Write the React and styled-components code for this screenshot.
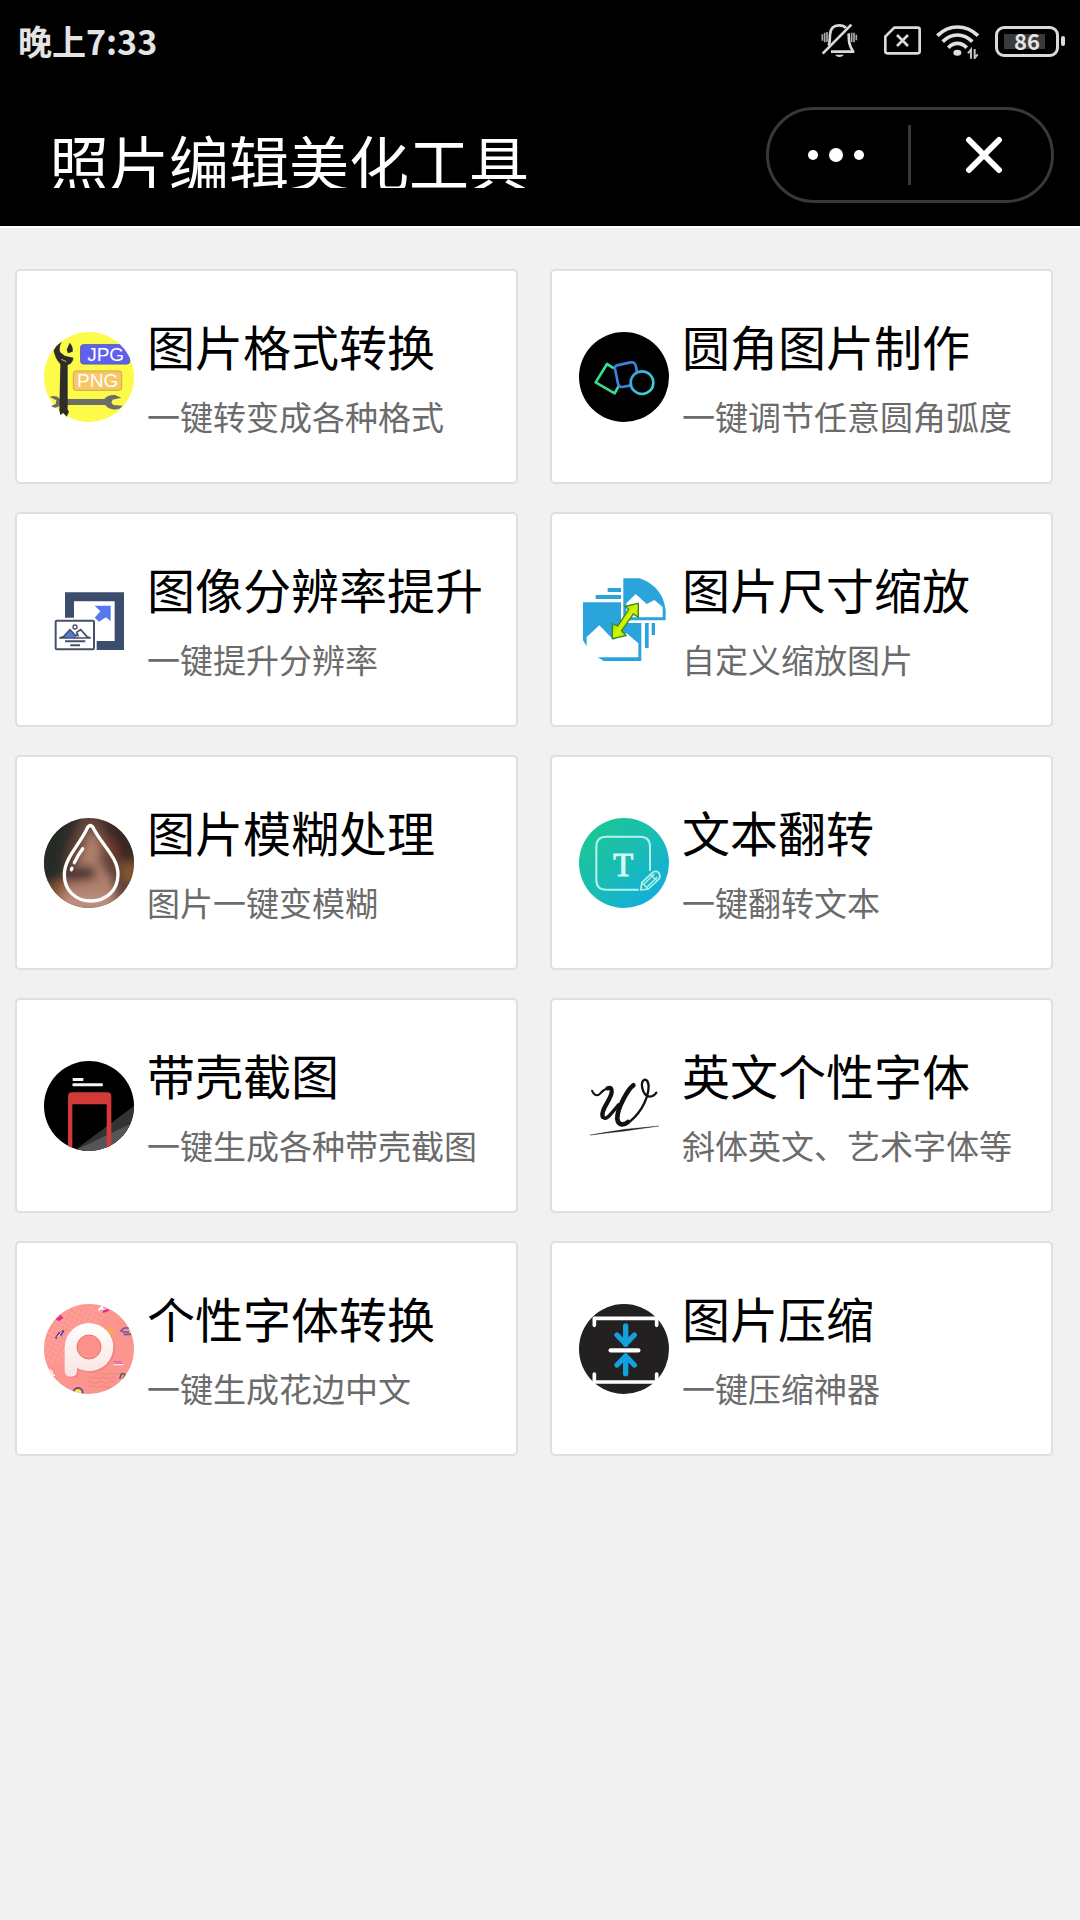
import React from 'react';
import styled, { createGlobalStyle } from 'styled-components';

const GlobalStyle = createGlobalStyle`
  * {
    box-sizing: border-box;
  }
  body {
    margin: 0;
    background-color: #f1f1f1;
    font-family: 'Noto Sans CJK SC', 'Noto Sans', sans-serif;
  }
`

const TopArea = styled.header`
  background-color: #000;
  border-bottom: 2px solid #fff;
`

const StatusBar = styled.div`
  display: flex;
  align-items: center;
  height: 82px;
  padding: 0 15px 0 18px;
  color: #e4e4e4;
`

const Time = styled.div`
  margin-right: auto;
  font-size: 34px;
  font-weight: 700;
  line-height: 80px;
`

const StatusIcon = styled.svg`
  display: block;
  height: 36px;
  width: ${({ $width }) => $width}px;
  margin-right: ${({ $gap }) => $gap}px;
`

const Battery = styled.div`
  display: flex;
  align-items: center;
  gap: 2px;
`

const BatteryBody = styled.div`
  width: 64px;
  height: 31px;
  border: 3px solid #dadada;
  border-radius: 9px;
  background: linear-gradient(#3a3a3a, #3a3a3a) 6px center / 41px 15px no-repeat;
  font-size: 22px;
  font-weight: 700;
  line-height: 23px;
  text-align: center;
`

const BatteryCap = styled.div`
  width: 4px;
  height: 10px;
  border-radius: 2px;
  background-color: #dadada;
`

const TitleBar = styled.div`
  display: flex;
  align-items: center;
  justify-content: space-between;
  height: 144px;
  padding: 2px 26px 0 49px;
`

const PageTitle = styled.h1`
  margin: 12px 0 0;
  font-size: 60px;
  font-weight: 400;
  line-height: 54px;
  color: #fff;
  white-space: nowrap;
  overflow: hidden;
`

const Capsule = styled.div`
  display: flex;
  align-items: center;
  width: 288px;
  height: 96px;
  border: 3px solid #383838;
  border-radius: 48px;
`

const CapsuleButton = styled.button`
  display: flex;
  flex: 1;
  align-items: center;
  justify-content: center;
  height: 100%;
  padding: ${({ $padding }) => $padding};
  border: 0;
  background: none;
  cursor: pointer;
`

const CapsuleDivider = styled.span`
  width: 3px;
  height: 60px;
  background-color: #383838;
`

const ToolGrid = styled.main`
  display: grid;
  grid-template-columns: 1fr 1fr;
  gap: 28px 32px;
  padding: 41px 27px 41px 15px;
`

const ToolCard = styled.a`
  display: flex;
  align-items: center;
  gap: 13px;
  height: 215px;
  padding: 0 27px;
  border: 2px solid #dfdfdf;
  border-radius: 5px;
  background-color: #fff;
  color: #000;
  text-decoration: none;
`

const ToolIcon = styled.svg`
  display: block;
  flex: none;
  width: 90px;
  height: 90px;
`

const ToolText = styled.div`
  padding-top: 10px;
  white-space: nowrap;
`

const ToolName = styled.div`
  font-size: 48px;
  line-height: 70px;
`

const ToolNote = styled.div`
  font-size: 33px;
  line-height: 73px;
  color: #6b6b6b;
`

const MuteIcon = () => (
    <StatusIcon $width={37} $gap={25} viewBox="243 69 111 108" fill="none" stroke="#dadada" strokeWidth="8">
        <path d="M266 137C270 128 269 116 270 104C271 84 283 76 297 76C307 76 313 78 318 84" />
        <path d="M326 100C327 122 325 132 339 154V155H273" />
        <path d="M248 161L334 74" />
        <path d="M285 164H312Q307 171 298 171Q290 171 285 164Z" fill="#d6d6d6" stroke="none" />
        <path d="M247 103V122M254 98V127M261 96V126M335 98V126M342 98V127M349 104V121" strokeWidth="5" stroke="#a9a9a9" />
    </StatusIcon>
)

const NoSimIcon = () => (
    <StatusIcon $width={39} $gap={13} viewBox="429 69 117 108" fill="none" stroke="#dadada" strokeWidth="8">
        <path d="M463 83H533Q539 83 539 89V154Q539 160 533 160H442Q436 160 436 154V110Z" />
        <path d="M471 105L504 138M504 105L471 138" />
    </StatusIcon>
)

const WifiIcon = () => (
    <StatusIcon $width={45} $gap={15} viewBox="585 69 135 108" fill="none" stroke="#e0e0e0" strokeWidth="11">
        <path d="M592 107Q619 81 652 81Q687 81 714 107" />
        <path d="M608 125Q628 105 652 105Q677 105 697 125" />
        <path d="M625 143Q637 130 652 130Q668 130 680 143" />
        <ellipse cx="652" cy="158" rx="12" ry="9" fill="#e0e0e0" stroke="none" />
        <path d="M693 176V149L684 160M704 147V174L713 163" strokeWidth="6" stroke="#c4c4c4" />
    </StatusIcon>
)

const MoreIcon = () => (
    <svg width="60" height="16" viewBox="0 0 60 16" fill="#fff" aria-hidden="true">
        <circle cx="7" cy="8" r="5" />
        <circle cx="30" cy="8" r="7" />
        <circle cx="53" cy="8" r="5" />
    </svg>
)

const CloseIcon = () => (
    <svg width="38" height="38" viewBox="0 0 38 38" stroke="#fff" strokeWidth="6" strokeLinecap="round" aria-hidden="true">
        <path d="M4 4L34 34M34 4L4 34" />
    </svg>
)

const FormatIcon = () => (
    <ToolIcon viewBox="45 63 270 270">
        <clipPath id="formatClip">
            <circle cx="180" cy="198" r="135" />
        </clipPath>
        <circle cx="180" cy="198" r="135" fill="#fdfb4a" />
        <g clipPath="url(#formatClip)">
            <rect x="155" y="101" width="147" height="58" rx="8" fill="#6060ee" stroke="#5559b8" strokeWidth="3" />
            <rect x="133" y="180" width="145" height="58" rx="8" fill="#f7c766" stroke="#d9a24e" strokeWidth="3" />
        </g>
        <text x="230" y="150" fontFamily="Liberation Sans" fontSize="57" textAnchor="middle" fill="#fff">JPG</text>
        <text x="206" y="229" fontFamily="Liberation Sans" fontSize="57" textAnchor="middle" fill="#fff">PNG</text>
        <path d="M112 264H226Q236 251 258 252L277 260L251 266L247 275L253 282L281 284Q270 298 250 295Q236 292 228 282H112Z" fill="#6c6c68" />
        <path d="M62 258Q82 249 93 264V283Q80 296 66 285L80 279L82 268Z" fill="#6c6c68" />
        <path d="M99 92Q88 108 94 124L107 134L133 140Q133 156 116 162V296L120 302L113 317L103 306L94 312L91 298L94 160Q78 142 74 119Q80 103 99 92Z" fill="#2e2d2a" />
        <path d="M122 95L113 116L117 127L131 122Q134 108 122 95Z" fill="#2e2d2a" />
        <path d="M97 145L112 152" stroke="#c9c650" strokeWidth="3" />
    </ToolIcon>
)

const RoundCornerIcon = () => (
    <ToolIcon viewBox="58 64 270 270" fill="none" strokeWidth="8" strokeLinejoin="round">
        <defs>
            <linearGradient id="shapeGreen" x1="0" y1="1" x2="1" y2="0">
                <stop offset="0" stopColor="#38d77a" />
                <stop offset="1" stopColor="#38e0b4" />
            </linearGradient>
            <linearGradient id="shapeCyan" x1="0" y1="0" x2="1" y2="1">
                <stop offset="0" stopColor="#3a9fe0" />
                <stop offset="1" stopColor="#3ddbd8" />
            </linearGradient>
        </defs>
        <circle cx="193" cy="199" r="135" fill="#000" />
        <path d="M163 173L142 160L108 215L165 248L178 224" stroke="url(#shapeGreen)" />
        <path d="M232 184L228 164Q224 153 213 155L172 164Q165 166 166 174L175 219Q178 230 188 229L213 224" stroke="#3d82dc" />
        <circle cx="247" cy="216" r="34" stroke="url(#shapeCyan)" />
    </ToolIcon>
)

const ResolutionIcon = () => (
    <ToolIcon viewBox="45 42 270 270">
        <path d="M108 94H285V267H203V240H257V121H135V170H108Z" fill="#3d4d6e" />
        <path d="M197 134H245V181L231 169L210 182L197 170L214 151Z" fill="#5578ee" />
        <rect x="80" y="179" width="115" height="86" rx="3" fill="#fff" stroke="#46506b" strokeWidth="6" />
        <path d="M91 231L104 227L123 206L146 230Z" fill="#5578ee" />
        <path d="M91 231H185L174 227L155 206L143 214L147 224L138 222L123 206L104 227Z" fill="none" stroke="#46506b" strokeWidth="5" />
        <circle cx="138" cy="198" r="6" fill="none" stroke="#46506b" strokeWidth="4" />
        <path d="M108 241H169M124 253H153" stroke="#46506b" strokeWidth="6" />
    </ToolIcon>
)

const ResizeIcon = () => (
    <ToolIcon viewBox="60 44 270 270">
        <defs>
            <linearGradient id="resizeArrow" x1="0" y1="0" x2="1" y2="1">
                <stop offset="0" stopColor="#35b51c" />
                <stop offset="0.5" stopColor="#d8f500" />
                <stop offset="1" stopColor="#5bce12" />
            </linearGradient>
        </defs>
        <path d="M193 54H242Q311 79 320 149V180H193Z" fill="#2ba4db" />
        <path d="M202 171V129L230 101L263 131L286 119L311 140V171Z" fill="#fff" />
        <path d="M72 126H186V188H247V302H134L116 291H238V249L203 219L163 238L121 195L83 230V258L72 240Z" fill="#2ba4db" />
        <path d="M146 83H186V95H146ZM110 104H186V116H110ZM258 188H269V263H258ZM278 188H288V224H278Z" fill="#2ba4db" />
        <path d="M238 129L198 138L209 147L176 197L160 190V235L201 226L188 211L223 161L238 171Z" fill="url(#resizeArrow)" stroke="#3b8427" strokeWidth="4" />
    </ToolIcon>
)

const BlurIcon = () => (
    <ToolIcon viewBox="45 54 270 270">
        <defs>
            <clipPath id="blurClip">
                <circle cx="180" cy="189" r="135" />
            </clipPath>
            <filter id="soften" x="-30%" y="-30%" width="160%" height="160%">
                <feGaussianBlur stdDeviation="14" />
            </filter>
        </defs>
        <g clipPath="url(#blurClip)">
            <rect x="45" y="54" width="270" height="270" fill="#5e4138" />
            <g filter="url(#soften)">
                <path d="M20 30H160L110 150L100 240L20 250Z" fill="#262b28" />
                <path d="M210 30H340V180H270Z" fill="#3a2823" />
                <path d="M200 110L262 130V200Z" fill="#7a3e31" />
                <path d="M182 80L215 130L215 190L250 240L270 300L90 330L110 250L150 180Z" fill="#b0806d" />
                <path d="M110 205L190 195L205 235L120 250Z" fill="#493530" />
                <path d="M80 250L110 240V300H70Z" fill="#97603a" />
                <path d="M275 195H320V245H285Z" fill="#8d5a28" />
                <path d="M90 290L250 280L260 340H90Z" fill="#bd8e80" />
            </g>
        </g>
        <path d="M184 76Q190 77 194 86C218 133 268 174 267 224C266 272 231 303 186 303C141 303 106 272 106 224C106 174 153 133 174 86Q178 77 184 76Z" fill="none" stroke="#fff" strokeWidth="10" />
        <path d="M161 146Q147 164 136 188M129 205L127 209" fill="none" stroke="#fff" strokeWidth="10" strokeLinecap="round" />
    </ToolIcon>
)

const TextFlipIcon = () => (
    <ToolIcon viewBox="58 54 270 270">
        <defs>
            <linearGradient id="flipFill" x1="0.15" y1="0.1" x2="0.85" y2="0.9">
                <stop offset="0" stopColor="#1bc695" />
                <stop offset="0.5" stopColor="#1abcb5" />
                <stop offset="1" stopColor="#12aedc" />
            </linearGradient>
        </defs>
        <circle cx="193" cy="189" r="135" fill="url(#flipFill)" />
        <path d="M237 269H140Q110 269 110 239V140Q110 110 140 110H241Q271 110 271 140V212" fill="none" stroke="#b5f3ea" strokeWidth="6" />
        <text x="191" y="228" fontFamily="Liberation Serif" fontSize="98" textAnchor="middle" fill="#d5faf5" stroke="#d5faf5" strokeWidth="3">T</text>
        <path d="M243 270L247 247L279 217Q288 211 297 218Q304 227 298 237L266 267Z" fill="#1ab5c8" stroke="#b5f3ea" strokeWidth="5" strokeLinejoin="round" />
        <path d="M247 248L266 267M254 251L284 222M263 260L293 231M272 223L292 242" stroke="#b5f3ea" strokeWidth="4" />
    </ToolIcon>
)

const ShellIcon = () => (
    <ToolIcon viewBox="45 63 270 270">
        <clipPath id="shellClip">
            <circle cx="180" cy="198" r="135" />
        </clipPath>
        <g clipPath="url(#shellClip)">
            <rect x="45" y="63" width="270" height="270" fill="#000" />
            <path d="M134 333L320 194V340Z" fill="#333" />
            <path d="M134 333L320 244V340Z" fill="#555" />
            <path d="M117 321V169Q117 157 129 157H235Q247 157 247 169V321H233V193H130V321Z" fill="#d13a38" />
            <path d="M131 114H163V123H131Z" fill="#f5f5f5" />
            <rect x="130" y="130" width="92" height="9" rx="4" fill="#f5f5f5" />
        </g>
    </ToolIcon>
)

const ScriptIcon = () => (
    <ToolIcon viewBox="58 64 270 270" fill="none" stroke="#111" strokeLinecap="round" strokeLinejoin="round">
        <path d="M97 153Q104 171 118 165Q131 150 144 145" strokeWidth="6" />
        <path d="M144 146Q158 141 156 158C153 182 122 210 129 231" strokeWidth="13" />
        <path d="M129 231C138 247 154 222 177 195" strokeWidth="10" />
        <path d="M221 137C205 148 172 206 173 237C175 256 190 259 205 247" strokeWidth="14" />
        <path d="M200 253C234 231 266 185 267 140Q265 118 254 120Q243 126 248 146Q253 169 270 171Q283 170 290 159" strokeWidth="7" />
        <path d="M92 286Q150 276 196 269L298 259L196 274Q140 280 92 286Z" fill="#222" strokeWidth="1" />
    </ToolIcon>
)

const FancyFontIcon = () => (
    <ToolIcon viewBox="45 57 270 270">
        <defs>
            <clipPath id="fancyClip">
                <circle cx="180" cy="192" r="135" />
            </clipPath>
            <pattern id="fancyMesh" width="14" height="14" patternUnits="userSpaceOnUse" patternTransform="rotate(28)">
                <path d="M0 0H14M0 0V14" stroke="#ffaca4" strokeWidth="3" fill="none" />
            </pattern>
            <linearGradient id="fancyWhite" x1="0" y1="0" x2="0" y2="1">
                <stop offset="0" stopColor="#fff" />
                <stop offset="1" stopColor="#fbe3e1" />
            </linearGradient>
        </defs>
        <g clipPath="url(#fancyClip)">
            <rect x="45" y="57" width="270" height="270" fill="#fd958f" />
            <path d="M100 60L240 65L205 120L120 150L100 240L40 230V130Z" fill="url(#fancyMesh)" />
            <path d="M182 279q8 -6 16 0t16 0t16 0t16 0t16 0M176 292q8 -6 16 0t16 0t16 0t16 0t16 0M182 305q8 -6 16 0t16 0t16 0t16 0M205 266q8 -6 16 0t16 0t16 0t16 0" fill="none" stroke="#ec827d" strokeWidth="3" />
            <circle cx="243" cy="138" r="12" fill="#fca45f" />
            <path d="M80 102L96 91L103 100L88 109Z" fill="#e32a90" />
            <path d="M78 92L94 88M80 160L91 144L96 149L104 136" stroke="#5b3b91" strokeWidth="6" fill="none" />
            <path d="M84 157L97 143" stroke="#fff" strokeWidth="3" />
            <path d="M208 76L219 66L222 77L238 72" stroke="#fff" strokeWidth="6" fill="none" />
            <path d="M221 80L239 74" stroke="#d3368c" strokeWidth="8" />
            <path d="M274 140L286 129H302M280 141H300M284 148H306" stroke="#6656a5" strokeWidth="5" fill="none" />
            <path d="M254 230H278M256 237H284" stroke="#d765a6" strokeWidth="4" />
            <path d="M254 239H284" stroke="#fff" strokeWidth="3" />
            <path d="M62 253L70 262L69 272L78 270" stroke="#fff" strokeWidth="4" fill="none" />
            <path d="M272 281L277 267Q289 263 288 274L281 282" stroke="#4e655f" strokeWidth="5" fill="none" />
            <circle cx="147" cy="323" r="14" fill="#f8e43c" stroke="#644b94" strokeWidth="6" />
        </g>
        <path d="M107 188A73 72 0 1 1 144 249V258Q144 275 126 275Q107 275 107 258Z" fill="#dd6f6c" opacity="0.4" transform="translate(5 5)" />
        <path d="M107 188A73 72 0 1 1 144 249V258Q144 275 126 275Q107 275 107 258Z" fill="url(#fancyWhite)" />
        <circle cx="180" cy="186" r="36" fill="#fd918c" stroke="#e87370" strokeWidth="3" />
    </ToolIcon>
)

const CompressIcon = () => (
    <ToolIcon viewBox="58 58 270 270" fill="none" strokeLinecap="round" strokeLinejoin="round">
        <circle cx="193" cy="193" r="135" fill="#232022" />
        <path d="M104 122V101H291V122M104 268V292H291V268" stroke="#fff" strokeWidth="11" />
        <path d="M153 197H236" stroke="#fff" strokeWidth="13" />
        <path d="M198 124V179M172 151L198 178L224 151M198 267V214M172 241L198 214L224 241" stroke="#12a0df" strokeWidth="16" />
    </ToolIcon>
)

const tools = [
    { name: '图片格式转换', note: '一键转变成各种格式', Icon: FormatIcon },
    { name: '圆角图片制作', note: '一键调节任意圆角弧度', Icon: RoundCornerIcon },
    { name: '图像分辨率提升', note: '一键提升分辨率', Icon: ResolutionIcon },
    { name: '图片尺寸缩放', note: '自定义缩放图片', Icon: ResizeIcon },
    { name: '图片模糊处理', note: '图片一键变模糊', Icon: BlurIcon },
    { name: '文本翻转', note: '一键翻转文本', Icon: TextFlipIcon },
    { name: '带壳截图', note: '一键生成各种带壳截图', Icon: ShellIcon },
    { name: '英文个性字体', note: '斜体英文、艺术字体等', Icon: ScriptIcon },
    { name: '个性字体转换', note: '一键生成花边中文', Icon: FancyFontIcon },
    { name: '图片压缩', note: '一键压缩神器', Icon: CompressIcon },
];

const App = () => {
    return (
        <>
            <GlobalStyle />
            <TopArea>
                <StatusBar>
                    <Time>晚上7:33</Time>
                    <MuteIcon />
                    <NoSimIcon />
                    <WifiIcon />
                    <Battery>
                        <BatteryBody>86</BatteryBody>
                        <BatteryCap />
                    </Battery>
                </StatusBar>
                <TitleBar>
                    <PageTitle>照片编辑美化工具</PageTitle>
                    <Capsule>
                        <CapsuleButton type="button" aria-label="更多" $padding="0 4px 0 0">
                            <MoreIcon />
                        </CapsuleButton>
                        <CapsuleDivider />
                        <CapsuleButton type="button" aria-label="关闭" $padding="0 0 0 6px">
                            <CloseIcon />
                        </CapsuleButton>
                    </Capsule>
                </TitleBar>
            </TopArea>
            <ToolGrid>
                {tools.map(({ name, note, Icon }) => (
                    <ToolCard key={name} href="#">
                        <Icon />
                        <ToolText>
                            <ToolName>{name}</ToolName>
                            <ToolNote>{note}</ToolNote>
                        </ToolText>
                    </ToolCard>
                ))}
            </ToolGrid>
        </>
    );
};

export default App;
